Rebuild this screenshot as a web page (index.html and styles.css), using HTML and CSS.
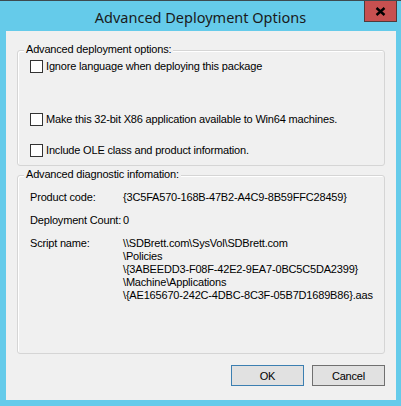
FILE: index.html
```html
<!DOCTYPE html>
<html>
<head>
<meta charset="utf-8">
<link rel="stylesheet" href="styles.css">
</head>
<body>
<div class="window">
  <div class="titlebar">
    <span class="title">Advanced Deployment Options</span>
  </div>
  <div class="close">
    <svg width="11" height="9" viewBox="0 0 11 9"><path d="M1.5 1 L9.5 8 M9.5 1 L1.5 8" stroke="#000" stroke-width="2.4" fill="none"/></svg>
  </div>
  <div class="client">
    <div class="group group-options">
      <span class="legend">Advanced deployment options:</span>
      <label class="check row1"><span class="box"></span><span>Ignore language when deploying this package</span></label>
      <label class="check row2"><span class="box"></span><span>Make this 32-bit X86 application available to Win64 machines.</span></label>
      <label class="check row3"><span class="box"></span><span>Include OLE class and product information.</span></label>
    </div>
    <div class="group group-diag">
      <span class="legend">Advanced diagnostic infomation:</span>
      <div class="info">
        <span>Product code:</span><span>{3C5FA570-168B-47B2-A4C9-8B59FFC28459}</span>
        <span>Deployment Count:</span><span>0</span>
        <span>Script name:</span>
        <span class="path">\\SDBrett.com\SysVol\SDBrett.com<br>\Policies<br>\{3ABEEDD3-F08F-42E2-9EA7-0BC5C5DA2399}<br>\Machine\Applications<br>\{AE165670-242C-4DBC-8C3F-05B7D1689B86}.aas</span>
      </div>
    </div>
    <div class="buttons">
      <button class="btn default">OK</button>
      <button class="btn">Cancel</button>
    </div>
  </div>
</div>
</body>
</html>
```
FILE: styles.css
```css
html, body { margin: 0; padding: 0; }
body { width: 401px; height: 406px; overflow: hidden; font-family: "Liberation Sans", Arial, sans-serif; font-size: 11px; letter-spacing: -0.18px; color: #000; }
.window { position: relative; width: 401px; height: 406px; box-sizing: border-box; background: #65CBEA; border-top: 1px solid #3d4a50; display: flex; flex-direction: column; }
.titlebar { height: 30px; display: flex; justify-content: center; align-items: center; }
.title { font-family: "Noto Sans", sans-serif; font-size: 14.5px; letter-spacing: 0; color: #1a1a1a; padding-top: 1px; }
.close { position: absolute; top: 0; right: 4px; width: 33px; height: 21px; box-sizing: border-box; background: #C75050; border: 1px solid #4f3b3b; border-top: none; display: flex; align-items: center; justify-content: center; }
.client { margin: 0 5px 6px 6px; height: 369px; box-sizing: border-box; background: #F0F0F0; padding: 19px 11px 14px 11px; display: flex; flex-direction: column; }
.group { border: 1px solid #D5D5D5; border-radius: 3px; box-shadow: inset 1px 1px 0 #fff; display: flex; flex-direction: column; align-items: flex-start; }
.group-options { height: 116px; box-sizing: border-box; }
.group-diag { height: 179px; box-sizing: border-box; margin-top: 9px; }
.legend { margin: -8px 0 0 6px; padding: 0 2px; line-height: 13px; background: #F0F0F0; white-space: nowrap; }
.check { display: flex; align-items: center; gap: 3px; margin-left: 12px; line-height: 13px; height: 13px; white-space: nowrap; }
.box { width: 13px; height: 13px; box-sizing: border-box; border: 1px solid #333; background: #fff; }
.row1 { margin-top: 4px; }
.row2 { margin-top: 40px; }
.row3 { margin-top: 18px; }
.info { margin: 10px 0 0 12px; display: grid; grid-template-columns: 93px auto; row-gap: 10px; line-height: 13px; white-space: nowrap; }
.path { line-height: 12.9px; }
.buttons { margin-top: 11px; display: flex; justify-content: flex-end; gap: 8px; }
.btn { width: 73px; height: 21px; box-sizing: border-box; background: #E1E1E1; border: 1px solid #707070; border-radius: 0; font-family: "Liberation Sans", Arial, sans-serif; font-size: 11px; letter-spacing: -0.18px; color: #000; padding: 0; margin: 0; }
.btn.default { border-color: #3C7FB1; }
```
